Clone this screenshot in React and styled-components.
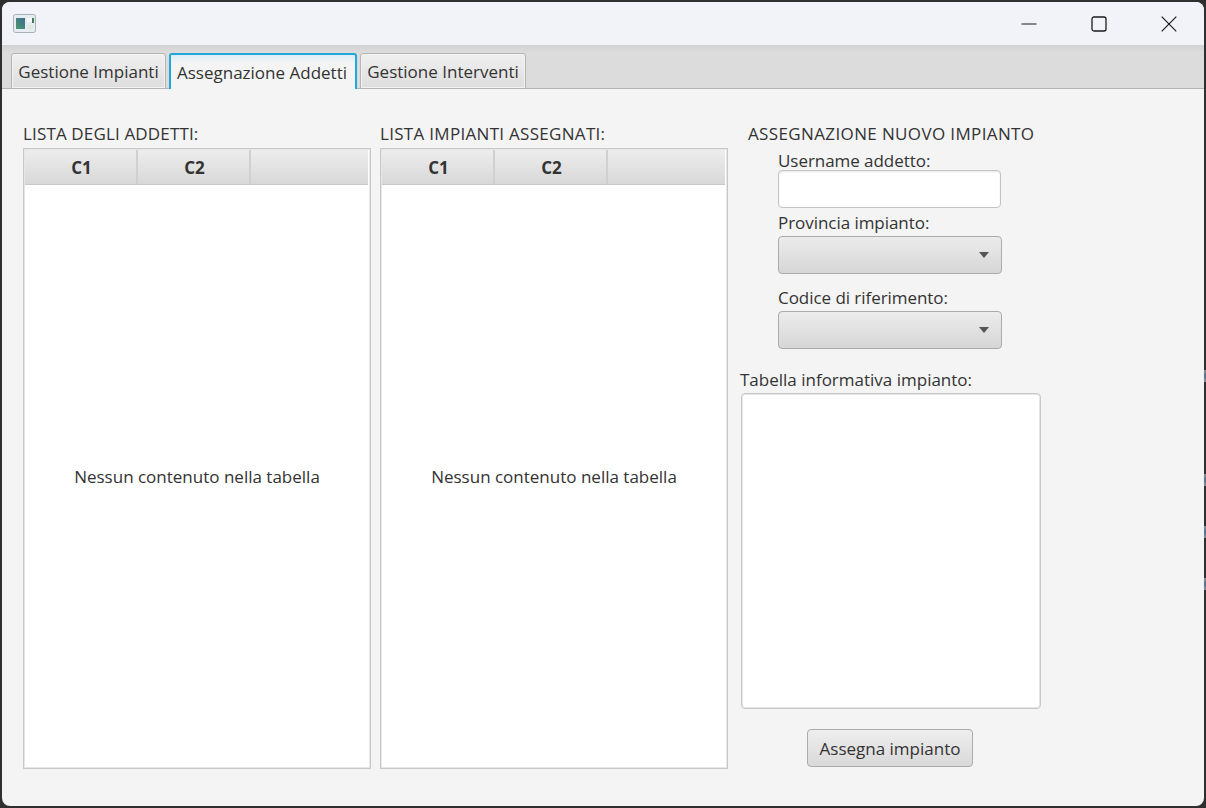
import React from 'react';
import styled, { createGlobalStyle } from 'styled-components';

const Global = createGlobalStyle`
  html, body { margin: 0; padding: 0; background: #2e2e2e; }
  body { font-family: "Open Sans", "Noto Sans", sans-serif; }
  * { box-sizing: border-box; }
`;

const Desktop = styled.div`
  width: 1206px;
  height: 808px;
  padding: 2px;
  background: #2f2f2f;
  overflow: hidden;
`;

const Win = styled.div`
  height: 100%;
  display: flex;
  flex-direction: column;
  background: #f4f4f4;
  border-radius: 8px;
  overflow: hidden;
`;

const TitleBar = styled.div`
  height: 43px;
  flex: none;
  display: flex;
  align-items: center;
  justify-content: space-between;
  background: #f1f3f8;
  padding: 0 0 0 11px;
`;

const WinButtons = styled.div`
  display: flex;
  align-items: center;
`;

const WinButton = styled.div`
  width: 70px;
  height: 43px;
  display: flex;
  align-items: center;
  justify-content: center;
  color: #1b1b1b;
`;

const TabHeader = styled.div`
  height: 44px;
  flex: none;
  display: flex;
  align-items: flex-end;
  gap: 3px;
  padding-left: 9px;
  background: linear-gradient(#d2d2d2 0, #dcdcdc 7px);
  border-bottom: 1px solid #b4b4b4;
`;

const Tab = styled.div`
  height: 36px;
  margin-bottom: -1px;
  padding-right: ${p => (p.$active ? '2px' : '0')};
  display: flex;
  align-items: center;
  justify-content: center;
  width: ${p => p.$w}px;
  font-size: 17px;
  color: #333;
  white-space: nowrap;
  border-radius: 3px 3px 0 0;
  border: ${p => (p.$active ? '2px solid #1fa8dc' : '1px solid #b4b4b4')};
  border-bottom: ${p => (p.$active ? 'none' : '1px solid #b4b4b4')};
  background: ${p => (p.$active ? 'linear-gradient(#dcecf4 0, #f4f4f4 8px)' : 'linear-gradient(#f0f0f0, #dedede)')};
  box-shadow: ${p => (p.$active ? 'none' : 'inset 0 0 0 1px #f2f2f2')};
`;

const Content = styled.div`
  flex: 1;
  display: flex;
  padding: 34px 0 0 21px;
`;

const TableColumn = styled.div`
  width: 348px;
  margin-right: ${p => p.$mr}px;
  display: flex;
  flex-direction: column;
`;

const Heading = styled.div`
  height: 25px;
  font-size: 17px;
  letter-spacing: ${p => p.$ls}px;
  line-height: 22px;
  color: #333;
  white-space: nowrap;
`;

const Table = styled.div`
  width: 348px;
  height: 621px;
  display: flex;
  flex-direction: column;
  padding: 1px;
  background: #fff;
  border: 1px solid #c8c8c8;
  box-shadow: inset 0 0 0 1px #e6e6e6;
`;

const HeaderRow = styled.div`
  height: 35px;
  flex: none;
  display: flex;
  margin-right: 1px;
  background: linear-gradient(#ededed, #d8d8d8);
  border-bottom: 1px solid #c8c8c8;
`;

const HeaderCell = styled.div`
  width: ${p => p.$w}px;
  flex: ${p => (p.$w ? 'none' : '1')};
  display: flex;
  align-items: center;
  justify-content: center;
  padding-left: 2px;
  font-weight: 700;
  font-size: 17px;
  color: #333;
  border-right: ${p => (p.$w ? '2px solid #d0d0d0' : 'none')};
`;

const Empty = styled.div`
  flex: 1;
  display: flex;
  align-items: center;
  justify-content: center;
  font-size: 17px;
  color: #333;
  white-space: nowrap;
`;

const FormColumn = styled.div`
  width: 302px;
  display: flex;
  flex-direction: column;
`;

const FormTitle = styled.div`
  height: 25px;
  line-height: 22px;
  margin-left: 8px;
  font-size: 17px;
  letter-spacing: 0.37px;
  color: #333;
  white-space: nowrap;
`;

const Field = styled.div`
  margin-left: 38px;
  display: flex;
  flex-direction: column;
`;

const FieldLabel = styled.div`
  height: 22px;
  line-height: 20px;
  font-size: 17px;
  letter-spacing: -0.05px;
  color: #333;
  margin-top: ${p => p.$mt || 0}px;
  position: relative;
  top: ${p => p.$nudge || 0}px;
  white-space: nowrap;
`;

const TextInput = styled.div`
  width: 223px;
  height: 38px;
  background: #fff;
  border: 1px solid #c4c4c4;
  border-radius: 4px;
  box-shadow: inset 0 1px 2px #e6e6e6;
`;

const Combo = styled.div`
  width: 224px;
  height: 38px;
  display: flex;
  align-items: center;
  justify-content: flex-end;
  padding-right: 12px;
  border: 1px solid #ababab;
  border-radius: 4px;
  background: linear-gradient(#ececec, #d6d6d6);
`;

const Arrow = styled.span`
  width: 0;
  height: 0;
  border-left: 5.5px solid transparent;
  border-right: 5.5px solid transparent;
  border-top: 6px solid #555;
`;

const InfoLabel = styled.div`
  height: 22px;
  line-height: 20px;
  margin-top: 21px;
  font-size: 17px;
  color: #333;
  white-space: nowrap;
`;

const InfoArea = styled.div`
  width: 300px;
  height: 316px;
  margin: 1px 0 0 1px;
  background: #fff;
  border: 1px solid #c8c8c8;
  border-radius: 4px;
  box-shadow: inset 0 0 0 1px #e6e6e6;
`;

const ButtonRow = styled.div`
  margin-top: 20px;
  display: flex;
  justify-content: center;
  padding-right: 2px;
`;

const Button = styled.button`
  width: 166px;
  height: 38px;
  padding: 0;
  font: inherit;
  font-size: 17px;
  color: #333;
  white-space: nowrap;
  border: 1px solid #ababab;
  border-radius: 4px;
  background: linear-gradient(#eeeeee, #d9d9d9);
`;

const EdgeMark = styled.span`
  position: absolute;
  left: 1204px;
  top: ${p => p.$y}px;
  width: 2px;
  height: 12px;
  background: linear-gradient(#8d8d8d, #4d6f96, #8d8d8d);
`;

const Frame = styled.div`
  position: relative;
`;

const AppIcon = () => (
  <svg width="24" height="20" viewBox="0 0 24 20">
    <defs>
      <linearGradient id="g" x1="0" y1="1" x2="1" y2="0">
        <stop offset="0" stopColor="#4a9a6c" />
        <stop offset="1" stopColor="#3d6a94" />
      </linearGradient>
    </defs>
    <rect x="0.5" y="0.5" width="22" height="18" rx="2" fill="#e6edf1" stroke="#aab0b8" />
    <rect x="3" y="4" width="9" height="11" fill="url(#g)" />
    <rect x="14" y="4" width="6" height="4" fill="#f6f8f6" />
    <rect x="19" y="4" width="2" height="5" fill="#3f7a5a" />
    <rect x="14" y="11" width="6" height="4" fill="#dfe8df" />
  </svg>
);

const DataTable = ({ heading, mr, ls }) => (
  <TableColumn $mr={mr}>
    <Heading $ls={ls}>{heading}</Heading>
    <Table>
      <HeaderRow>
        <HeaderCell $w={113}>C1</HeaderCell>
        <HeaderCell $w={113}>C2</HeaderCell>
        <HeaderCell />
      </HeaderRow>
      <Empty>Nessun contenuto nella tabella</Empty>
    </Table>
  </TableColumn>
);

export default function App() {
  return (
    <Frame>
      <Global />
      <Desktop>
        <Win>
          <TitleBar>
            <AppIcon />
            <WinButtons>
              <WinButton>
                <svg width="16" height="16" viewBox="0 0 16 16"><path d="M0.5 8h15" stroke="currentColor" strokeWidth="1" /></svg>
              </WinButton>
              <WinButton>
                <svg width="16" height="16" viewBox="0 0 16 16"><rect x="1" y="1" width="14" height="14" rx="2" fill="none" stroke="currentColor" strokeWidth="1.3" /></svg>
              </WinButton>
              <WinButton>
                <svg width="16" height="16" viewBox="0 0 16 16"><path d="M0.7 0.7l14.6 14.6M15.3 0.7L0.7 15.3" stroke="currentColor" strokeWidth="1.2" /></svg>
              </WinButton>
            </WinButtons>
          </TitleBar>
          <TabHeader>
            <Tab $w={155}>Gestione Impianti</Tab>
            <Tab $w={188} $active>Assegnazione Addetti</Tab>
            <Tab $w={166}>Gestione Interventi</Tab>
          </TabHeader>
          <Content>
            <DataTable heading="LISTA DEGLI ADDETTI:" mr={9} ls={0.15} />
            <DataTable heading="LISTA IMPIANTI ASSEGNATI:" mr={12} ls={0.3} />
            <FormColumn>
              <FormTitle>ASSEGNAZIONE NUOVO IMPIANTO</FormTitle>
              <Field>
                <FieldLabel $nudge={3}>Username addetto:</FieldLabel>
                <TextInput />
                <FieldLabel $mt={6} $nudge={-1}>Provincia impianto:</FieldLabel>
                <Combo><Arrow /></Combo>
                <FieldLabel $mt={15} $nudge={-1}>Codice di riferimento:</FieldLabel>
                <Combo><Arrow /></Combo>
              </Field>
              <InfoLabel>Tabella informativa impianto:</InfoLabel>
              <InfoArea />
              <ButtonRow>
                <Button>Assegna impianto</Button>
              </ButtonRow>
            </FormColumn>
          </Content>
        </Win>
      </Desktop>
      {[370, 474, 526, 578].map(y => <EdgeMark key={y} $y={y} />)}
    </Frame>
  );
}
